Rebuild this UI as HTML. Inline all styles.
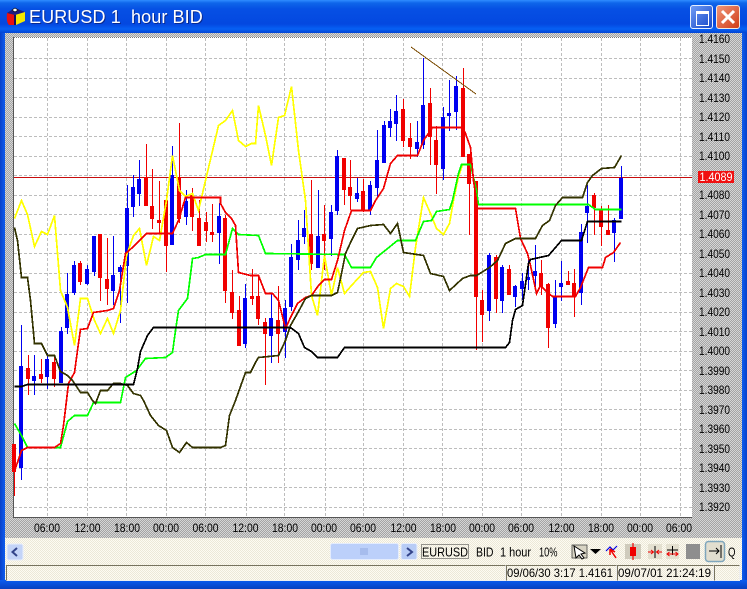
<!DOCTYPE html>
<html>
<head>
<meta charset="utf-8">
<style>
html,body{margin:0;padding:0;background:#c4c4c4}
#w{position:relative;width:747px;height:589px;overflow:hidden;font-family:"Liberation Sans",sans-serif}
.abs{position:absolute}
#gray{left:0;top:0;width:747px;height:589px;background:repeating-conic-gradient(#a4a4a4 0 25%,#d6d6d6 0 50%) 0 0/2px 2px}
#title{left:0;top:0;width:747px;height:33px;background:linear-gradient(#2f8cff 0,#0f66ea 3px,#0650e4 9px,#0448e0 24px,#0660f4 29px,#0344d4 33px)}
#lb{left:0;top:33px;width:5px;height:556px;background:linear-gradient(90deg,#0840c8,#0d5cf0)}
#rb{left:742px;top:33px;width:5px;height:556px;background:linear-gradient(90deg,#0d5cf0,#0840c8)}
#bb{left:0;top:580px;width:747px;height:9px;background:linear-gradient(#0a5cf0,#0840c0)}
#tt{left:29px;top:6px;color:#fff;font-size:18px;line-height:22px;white-space:pre;letter-spacing:.1px;text-shadow:1px 1px 0 #0a2a90}
#cream{left:5px;top:538px;width:737px;height:42px;background:repeating-conic-gradient(#ece8d8 0 25%,#fdfbf2 0 50%) 0 0/2px 2px}
.btn{border-radius:3px;box-sizing:border-box}
#max{left:690px;top:5px;width:23px;height:24px;background:linear-gradient(135deg,#6f9bf5,#1648c8);border:1px solid #e8f0ff}
#max i{position:absolute;left:5px;top:5px;width:11px;height:11px;border:1px solid #fff;border-top-width:3px}
#cls{left:716px;top:5px;width:24px;height:24px;background:linear-gradient(135deg,#f0967a,#d03c16);border:1px solid #f0e8e0}
.sb{height:16px;top:565px;box-sizing:border-box;border:1px solid;border-color:#77735f #eee #eee #77735f}
</style>
</head>
<body>
<div id="w">
<div class="abs" id="gray"></div>
<div class="abs" id="title"></div>
<div class="abs" id="lb"></div>
<div class="abs" id="rb"></div>
<div class="abs" id="bb"></div>
<div class="abs" id="cream"></div>
<div class="abs" id="tt">EURUSD 1  hour BID</div>
<div class="abs btn" id="max"><i></i></div>
<div class="abs btn" id="cls">
<svg width="22" height="22" style="position:absolute;left:0;top:0"><path d="M5 5L17 17M17 5L5 17" stroke="#fff" stroke-width="3" fill="none"/></svg>
</div>
<div class="abs sb" style="left:6px;width:500px"></div>
<div class="abs sb" style="left:506px;width:111px"></div>
<div class="abs sb" style="left:617px;width:97px"></div>
<div class="abs sb" style="left:714px;width:26px"></div>
<svg class="abs" style="left:0;top:0" width="747" height="589" viewBox="0 0 747 589" font-family="Liberation Sans, sans-serif">
<!-- app icon -->
<path d="M7 13L15 10V25H9Q6 22 7 13Z" fill="#e81010"/>
<path d="M16 10L25 12V21L16 25Z" fill="#f4e800"/>
<path d="M7 13L15 8L25 12L15 15Z" fill="#1c1c80"/>
<path d="M15 15V25" stroke="#101060" stroke-width="2"/>
<path d="M12 10l3-2 3 2-3 2z" fill="#fff" stroke="#000" stroke-width=".6"/>
<!-- chart -->
<rect x="14" y="37" width="678" height="480" fill="#fff"/>
<path d="M13.5 37V517.5H692" fill="none" stroke="#555" stroke-width="1"/>
<path d="M14 37.5H692" fill="none" stroke="#777" stroke-dasharray="1 1"/>
<g stroke="#bdbdbd" stroke-width="1" fill="none" stroke-dasharray="3 2" shape-rendering="crispEdges">
<path d="M47.5 38V517M87.5 38V517M126.5 38V517M166.5 38V517M205.5 38V517M246.5 38V517M284.5 38V517M325.5 38V517M363.5 38V517M403.5 38V517M442.5 38V517M482.5 38V517M521.5 38V517M561.5 38V517M601.5 38V517M640.5 38V517M680.5 38V517"/>
<path d="M14 58.5H692M14 78.5H692M14 97.5H692M14 117.5H692M14 136.5H692M14 156.5H692M14 175.5H692M14 195.5H692M14 214.5H692M14 234.5H692M14 253.5H692M14 273.5H692M14 292.5H692M14 312.5H692M14 331.5H692M14 351.5H692M14 370.5H692M14 390.5H692M14 409.5H692M14 429.5H692M14 448.5H692M14 468.5H692M14 487.5H692M14 507.5H692"/>
</g>
<path d="M14 177.5H692" stroke="#c80c0c" stroke-width="1" shape-rendering="crispEdges"/>
<!-- wicks -->
<path shape-rendering="crispEdges" fill="none" stroke="#0000f0" stroke-width="1" d="M21.5 325V480M34.5 355V395M47.5 353V389M61.5 327V383M67.5 273V334M74.5 261V295M87.5 265V285M94.5 236V276M113.5 236V305M120.5 265V323M127.5 185V303M133.5 175V217M139.5 160V206M172.5 146V245M186.5 190V225M219.5 203V264M245.5 284V348M271.5 294V363M285.5 300V358M291.5 244V311M298.5 220V270M304.5 210V244M318.5 190V268M331.5 205V256M337.5 150V215M357.5 178V202M370.5 181V215M377.5 130V197M384.5 121V163M390.5 109V137M396.5 95V141M417.5 121V157M423.5 58V149M443.5 107V180M449.5 80V131M456.5 76V130M489.5 253V321M502.5 265V313M515.5 285V307M522.5 273V300M528.5 260V290M535.5 245V291M555.5 280V328M561.5 261V301M581.5 224V305M587.5 185V243M614.5 218V262M621.5 166V219"/>
<path shape-rendering="crispEdges" fill="none" stroke="#f00000" stroke-width="1" d="M14.5 444V496M28.5 355V395M41.5 359V383M54.5 355V387M80.5 261V285M100.5 234V301M107.5 238V305M146.5 144V206M152.5 169V229M159.5 181V233M166.5 195V272M179.5 123V223M192.5 188V231M199.5 200V246M206.5 212V242M212.5 204V242M225.5 215V303M232.5 270V319M239.5 296V346M252.5 269V305M258.5 275V325M265.5 318V385M278.5 286V363M311.5 180V270M324.5 205V270M344.5 158V205M350.5 160V210M363.5 179V212M403.5 99V147M410.5 123V159M430.5 88V165M436.5 126V194M463.5 68V157M469.5 154V235M476.5 181V350M482.5 290V342M496.5 255V313M509.5 265V295M541.5 260V295M548.5 283V348M568.5 271V285M574.5 269V317M594.5 193V235M601.5 206V246M608.5 205V235"/>
<!-- bodies -->
<path shape-rendering="crispEdges" fill="none" stroke="#0000f0" stroke-width="4" d="M21 366V468M34 376V381M47 359V377M61 331V383M67 294V328M74 265V293M87 269V284M94 236V272M113 275V291M120 267V272M127 208V266M133 187V207M139 179V194M172 175V245M186 201V217M219 216V233M245 298V344M271 318V336M285 308V332M291 257V307M298 240V260M304 228V237M318 236V268M331 212V239M337 156V211M357 193V199M370 185V210M377 160V188M384 125V163M390 121V128M396 111V124M417 142V149M423 105V145M443 117V169M449 113V116M456 86V112M489 255V311M502 267V301M515 286V297M522 281V289M528 277V280M535 271V276M555 297V324M561 283V287M581 232V293M587 206V213M614 220V233M621 178V219"/>
<path shape-rendering="crispEdges" fill="none" stroke="#f00000" stroke-width="4" d="M14 444V472M28 368V379M41 374V379M54 362V379M80 263V282M100 234V278M107 279V289M146 177V206M152 206V219M159 220V223M166 200V246M179 177V219M192 195V217M199 218V246M206 222V231M212 232V235M225 218V291M232 292V313M239 310V346M252 296V299M258 296V319M265 322V334M278 320V334M311 234V264M324 234V241M344 158V190M350 187V196M363 191V210M403 109V141M410 138V147M430 103V137M436 140V165M463 88V157M469 154V184M476 181V297M482 300V315M496 257V299M509 269V295M541 273V287M548 284V328M568 281V285M574 283V297M594 195V208M601 210V227M608 230V235"/>
<g fill="none" stroke-width="1.7" shape-rendering="crispEdges" transform="translate(.5 .5)">
<!-- yellow -->
<polyline stroke="#ffff00" points="14,218 21,200 27,214 34,246 41,231 47,234 54,215 60,290 67,307 74,345 80,298 87,298 94,320 100,333 107,318 113,333 120,310 126,255 133,235 139,228 146,265 153,236 159,240 166,200 172,155 179,190 185,196 192,193 198,210 205,180 218,125 225,120 232,110 238,140 245,146 251,143 255,143 258,105 265,135 271,165 278,117 284,115 291,86 298,150 305,200 311,295 317,315 324,255 331,295 337,267 344,293 351,285 363,272 370,271 377,287 383,328 390,288 396,283 403,286 409,296 415,247 423,197 430,213 436,228 443,234 449,223 453,200 458,176 462,164"/>
<!-- green -->
<polyline stroke="#00ff00" points="14,423 21,435 27,447 60,447 67,421 74,415 87,415 93,402 120,402 125,377 136,370 145,358 165,357 172,352 175,330 178,310 187,298 192,258 198,257 205,254 225,254 232,228 238,234 258,235 265,253 344,254 351,267 370,267 376,257 397,240 415,240 423,221 431,220 436,211 449,209 452,200 458,173 461,164 470,164 476,190 478,204 588,204 595,209 621,209"/>
<!-- red -->
<polyline stroke="#f00000" points="14,470 17,462 21,450 27,447 54,447 60,443 63,425 66,400 68,383 74,372 77,350 80,329 87,328 93,312 107,310 113,308 119,290 125,253 132,247 139,240 146,233 172,233 178,220 185,197 220,197 220,203 225,212 231,218 235,225 238,272 250,275 258,275 265,293 272,293 278,300 285,328 290,317 297,303 305,297 311,295 318,285 324,279 331,279 337,260 344,230 351,210 370,210 375,200 383,188 390,163 397,155 417,155 423,140 432,127 462,127 465,133 470,147 473,180 476,200 477,208 515,208 520,238 527,253 530,265 536,293 540,285 547,292 552,296 575,296 580,287 588,267 602,267 605,257 613,252 620,242"/>
<!-- olive -->
<polyline stroke="#333300" points="14,227 17,240 21,277 27,277 30,300 34,343 41,343 47,355 54,355 60,371 67,375 72,380 80,392 87,392 92,400 95,403 100,390 107,390 113,383 120,383 127,385 133,393 140,395 143,400 150,415 158,425 166,430 172,447 179,452 186,442 192,447 220,447 225,445 229,415 235,400 245,372 250,372 255,362 258,357 278,355 285,340 290,325 298,311 305,298 311,295 331,295 337,292 341,273 345,253 351,240 357,228 370,225 383,224 390,233 397,223 403,252 423,255 430,273 443,276 449,290 462,278 470,275 476,275 489,267 497,260 505,243 515,238 535,238 542,225 549,220 555,205 562,197 582,197 587,182 592,175 601,168 614,167 621,155"/>
<!-- black -->
<polyline stroke="#000" points="14,386 21,386 27,384 133,384 137,368 140,351 147,335 153,327 290,327 298,333 304,347 311,351 317,357 337,357 344,347 505,347 509,342 512,320 515,309 522,305 528,263 530,259 548,255 555,247 561,240 581,240 587,221 621,221"/>
</g>
<!-- trend -->
<path d="M411 47L476 94" stroke="#7a4a00" stroke-width="1" fill="none" shape-rendering="crispEdges"/>
<!-- price labels -->
<g font-size="11.500" fill="#000">
<text x="699" y="43" textLength="31" lengthAdjust="spacingAndGlyphs">1.4160</text><text x="699" y="63" textLength="31" lengthAdjust="spacingAndGlyphs">1.4150</text><text x="699" y="82" textLength="31" lengthAdjust="spacingAndGlyphs">1.4140</text><text x="699" y="102" textLength="31" lengthAdjust="spacingAndGlyphs">1.4130</text><text x="699" y="121" textLength="31" lengthAdjust="spacingAndGlyphs">1.4120</text><text x="699" y="141" textLength="31" lengthAdjust="spacingAndGlyphs">1.4110</text><text x="699" y="160" textLength="31" lengthAdjust="spacingAndGlyphs">1.4100</text>
<text x="699" y="199" textLength="31" lengthAdjust="spacingAndGlyphs">1.4080</text><text x="699" y="219" textLength="31" lengthAdjust="spacingAndGlyphs">1.4070</text><text x="699" y="238" textLength="31" lengthAdjust="spacingAndGlyphs">1.4060</text><text x="699" y="258" textLength="31" lengthAdjust="spacingAndGlyphs">1.4050</text><text x="699" y="277" textLength="31" lengthAdjust="spacingAndGlyphs">1.4040</text><text x="699" y="297" textLength="31" lengthAdjust="spacingAndGlyphs">1.4030</text><text x="699" y="316" textLength="31" lengthAdjust="spacingAndGlyphs">1.4020</text><text x="699" y="336" textLength="31" lengthAdjust="spacingAndGlyphs">1.4010</text><text x="699" y="355" textLength="31" lengthAdjust="spacingAndGlyphs">1.4000</text><text x="699" y="375" textLength="31" lengthAdjust="spacingAndGlyphs">1.3990</text><text x="699" y="394" textLength="31" lengthAdjust="spacingAndGlyphs">1.3980</text><text x="699" y="414" textLength="31" lengthAdjust="spacingAndGlyphs">1.3970</text><text x="699" y="433" textLength="31" lengthAdjust="spacingAndGlyphs">1.3960</text><text x="699" y="453" textLength="31" lengthAdjust="spacingAndGlyphs">1.3950</text><text x="699" y="472" textLength="31" lengthAdjust="spacingAndGlyphs">1.3940</text><text x="699" y="492" textLength="31" lengthAdjust="spacingAndGlyphs">1.3930</text><text x="699" y="511" textLength="31" lengthAdjust="spacingAndGlyphs">1.3920</text>
</g>
<rect x="698" y="171" width="36" height="12" fill="#f01010"/>
<text x="699.500" y="181" font-size="11.500" fill="#fff" textLength="33" lengthAdjust="spacingAndGlyphs">1.4089</text>
<!-- time labels -->
<g font-size="11.500" fill="#000">
<text x="34" y="532" textLength="26" lengthAdjust="spacingAndGlyphs">06:00</text><text x="74.500" y="532" textLength="26" lengthAdjust="spacingAndGlyphs">12:00</text><text x="114" y="532" textLength="26" lengthAdjust="spacingAndGlyphs">18:00</text><text x="153" y="532" textLength="26" lengthAdjust="spacingAndGlyphs">00:00</text><text x="192.500" y="532" textLength="26" lengthAdjust="spacingAndGlyphs">06:00</text><text x="232.500" y="532" textLength="26" lengthAdjust="spacingAndGlyphs">12:00</text><text x="272" y="532" textLength="26" lengthAdjust="spacingAndGlyphs">18:00</text><text x="311" y="532" textLength="26" lengthAdjust="spacingAndGlyphs">00:00</text><text x="350" y="532" textLength="26" lengthAdjust="spacingAndGlyphs">06:00</text><text x="390.500" y="532" textLength="26" lengthAdjust="spacingAndGlyphs">12:00</text><text x="430" y="532" textLength="26" lengthAdjust="spacingAndGlyphs">18:00</text><text x="469" y="532" textLength="26" lengthAdjust="spacingAndGlyphs">00:00</text><text x="508" y="532" textLength="26" lengthAdjust="spacingAndGlyphs">06:00</text><text x="548.500" y="532" textLength="26" lengthAdjust="spacingAndGlyphs">12:00</text><text x="588" y="532" textLength="26" lengthAdjust="spacingAndGlyphs">18:00</text><text x="627" y="532" textLength="26" lengthAdjust="spacingAndGlyphs">00:00</text><text x="666" y="532" textLength="26" lengthAdjust="spacingAndGlyphs">06:00</text>
</g>
<!-- scroll controls -->
<rect x="7" y="544" width="16" height="16" rx="2" fill="#c4d4f8" stroke="#e8eefc"/>
<path d="M17 548L12.500 552L17 556" fill="none" stroke="#33448a" stroke-width="2"/>
<rect x="330.500" y="543.500" width="68" height="16" rx="2" fill="#bcd0fa" stroke="#e4ecfc"/>
<path d="M361 548v7M363 548v7M365 548v7M367 548v7" stroke="#8fa8e0" stroke-width="1"/>
<rect x="401" y="543.500" width="16" height="16" rx="2" fill="#b8ccf6" stroke="#e8eefc"/>
<path d="M407 548L412 552L407 556" fill="none" stroke="#33448a" stroke-width="2"/>
<rect x="421.500" y="544.500" width="47" height="14" fill="none" stroke="#333" stroke-dasharray="1 1"/>
<g font-size="13" fill="#000">
<text x="422" y="556.500" textLength="46" lengthAdjust="spacingAndGlyphs">EURUSD</text>
<text x="476" y="556.500" textLength="17.500" lengthAdjust="spacingAndGlyphs">BID</text>
<text x="500" y="556.500" textLength="31" lengthAdjust="spacingAndGlyphs">1 hour</text>
<text x="539" y="556.500" textLength="18.500" lengthAdjust="spacingAndGlyphs">10%</text>
<text x="728" y="556.500" textLength="7.500" lengthAdjust="spacingAndGlyphs">Q</text>
</g>
<g font-size="12" fill="#000">
<text x="507" y="577" textLength="106" lengthAdjust="spacingAndGlyphs">09/06/30 3:17 1.4161</text>
<text x="618" y="577" textLength="93" lengthAdjust="spacingAndGlyphs">09/07/01  21:24:19</text>
</g>
<!-- toolbar icons -->
<rect x="572" y="545" width="15" height="13" fill="#d8d4c4" stroke="#444" stroke-width=".8"/>
<path d="M574 546L585 553L581 554L584 558L582 559L579 555L576 558Z" fill="#fff" stroke="#000" stroke-width="1"/>
<path d="M590 549H601L595.500 554Z" fill="#000"/>
<path d="M606 551L610 547L613 550L617 546" fill="none" stroke="#0000e0" stroke-width="1.200"/>
<path d="M610 549L616 558M610 549L615 552M610 549L610 555" fill="none" stroke="#f00000" stroke-width="1.500"/>
<rect x="625" y="544" width="16" height="15" fill="#cfcbbc"/>
<path d="M633 543V560" stroke="#f00000" stroke-width="1.200"/>
<rect x="630" y="547" width="6" height="9" fill="#f00000"/>
<rect x="648" y="544" width="14" height="15" fill="#e4e0d0"/>
<path d="M655 546V558" stroke="#000"/>
<path d="M648 552H653.500M662 552H656.500M651 550L653.500 552L651 554M659 550L656.500 552L659 554" stroke="#f00000" fill="none"/>
<rect x="666" y="544" width="13" height="15" fill="#e4e0d0"/>
<path d="M667 550H678M672.500 546V555" stroke="#000"/>
<path d="M667 554H678M669.500 552L667 554L669.500 556M675.500 552L678 554L675.500 556" stroke="#f00000" fill="none"/>
<rect x="686" y="544" width="14" height="15" fill="#8e8e8e"/>
<rect x="705.500" y="541.500" width="19" height="20" rx="3" fill="#e2decf" stroke="#7fa6bc" stroke-width="1.500"/>
<path d="M709 551H719M716 548L719 551L716 554M721 545V558" fill="none" stroke="#000"/>
</svg>
</div>
</body>
</html>
